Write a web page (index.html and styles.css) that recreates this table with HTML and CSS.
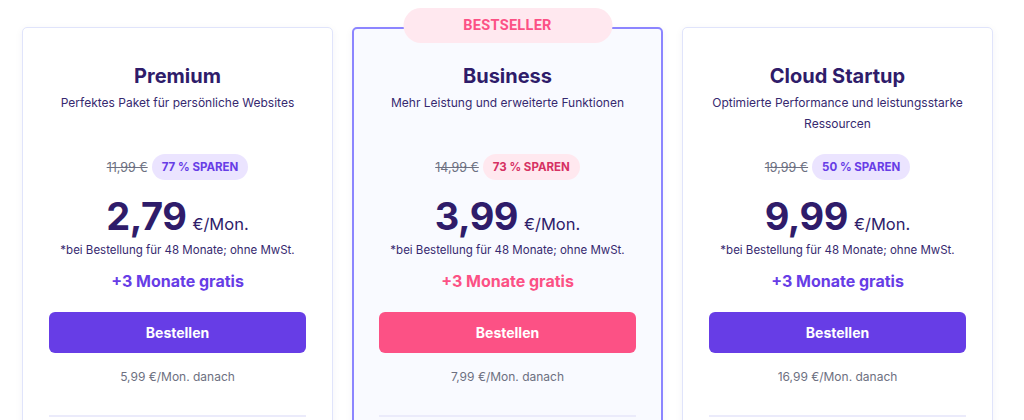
FILE: index.html
```html
<!DOCTYPE html>
<html lang="de">
<head>
<meta charset="utf-8">
<title>Preise</title>
<link rel="stylesheet" href="styles.css">
</head>
<body>
<main class="plans">
  <section class="card">
    <h2 class="title">Premium</h2>
    <p class="subtitle">Perfektes Paket für persönliche Websites</p>
    <div class="save-row">
      <span class="old">11,99 €</span>
      <span class="save">77 % SPAREN</span>
    </div>
    <div class="price"><span class="amount">2,79</span><span class="unit">€/Mon.</span></div>
    <p class="note">*bei Bestellung für 48 Monate; ohne MwSt.</p>
    <p class="bonus">+3 Monate gratis</p>
    <button class="order">Bestellen</button>
    <p class="after">5,99 €/Mon. danach</p>
    <hr class="divider">
  </section>
  <section class="card card--featured">
    <div class="ribbon">BESTSELLER</div>
    <h2 class="title">Business</h2>
    <p class="subtitle">Mehr Leistung und erweiterte Funktionen</p>
    <div class="save-row">
      <span class="old">14,99 €</span>
      <span class="save save--pink">73 % SPAREN</span>
    </div>
    <div class="price"><span class="amount">3,99</span><span class="unit">€/Mon.</span></div>
    <p class="note">*bei Bestellung für 48 Monate; ohne MwSt.</p>
    <p class="bonus bonus--pink">+3 Monate gratis</p>
    <button class="order order--pink">Bestellen</button>
    <p class="after">7,99 €/Mon. danach</p>
    <hr class="divider">
  </section>
  <section class="card">
    <h2 class="title">Cloud Startup</h2>
    <p class="subtitle">Optimierte Performance und leistungsstarke Ressourcen</p>
    <div class="save-row">
      <span class="old">19,99 €</span>
      <span class="save">50 % SPAREN</span>
    </div>
    <div class="price"><span class="amount">9,99</span><span class="unit">€/Mon.</span></div>
    <p class="note">*bei Bestellung für 48 Monate; ohne MwSt.</p>
    <p class="bonus">+3 Monate gratis</p>
    <button class="order">Bestellen</button>
    <p class="after">16,99 €/Mon. danach</p>
    <hr class="divider">
  </section>
</main>
</body>
</html>
```
FILE: styles.css
```css
* { box-sizing: border-box; }
html, body { margin: 0; padding: 0; overflow: hidden; background: #fff; }
body {
  font-family: Inter, "DejaVu Sans", sans-serif;
  color: #2f1c6a;
}
.plans {
  display: flex;
  gap: 19px;
  padding: 27px 0 0 22px;
}
.card {
  position: relative;
  width: 311px;
  min-height: 460px;
  flex: none;
  background: #fff;
  border: 1px solid #e0e4fb;
  border-radius: 5px;
  padding: 34px 26px 0;
  display: flex;
  flex-direction: column;
  align-items: center;
  text-align: center;
  box-shadow: 0 2px 8px rgba(47, 28, 106, 0.05);
}
.card--featured {
  background: #f9faff;
  border: 2px solid #8c85ff;
  padding-top: 33px;
  padding-left: 25px;
  padding-right: 25px;
}
.ribbon {
  position: absolute;
  top: -21px;
  left: 50%;
  transform: translateX(-50%);
  width: 209px;
  height: 35px;
  border-radius: 18px;
  background: #ffe8ef;
  color: #fc5185;
  font-family: Roboto, "Liberation Sans", sans-serif;
  font-weight: 700;
  font-size: 14.5px;
  letter-spacing: 0.3px;
  display: flex;
  align-items: center;
  justify-content: center;
}
.title {
  margin: 0;
  font-size: 20px;
  line-height: 28px;
  font-weight: 700;
}
.subtitle {
  margin: 2px 0 0;
  font-size: 12px;
  line-height: 21px;
  min-height: 42px;
  color: #36296f;
}
.save-row {
  margin-top: 20px;
  display: flex;
  align-items: center;
  gap: 4px;
}
.old {
  font-size: 12.5px;
  color: #6d7081;
  text-decoration: line-through;
}
.save {
  height: 26px;
  line-height: 26px;
  padding: 0 10px;
  border-radius: 13px;
  background: #ebe4ff;
  color: #673de6;
  font-size: 11.5px;
  font-weight: 700;
}
.save--pink { background: #ffe8ef; color: #d63163; }
.price {
  margin-top: 9px;
  display: flex;
  align-items: baseline;
  gap: 6px;
  height: 54px;
}
.amount {
  font-size: 38px;
  line-height: 54px;
  font-weight: 700;
  letter-spacing: -0.5px;
}
.unit {
  font-size: 16.5px;
}
.note {
  margin: -2px 0 0;
  font-size: 11.5px;
  line-height: 18px;
  color: #36296f;
}
.bonus {
  margin: 10px 0 0;
  font-size: 16px;
  line-height: 24px;
  font-weight: 700;
  color: #673de6;
}
.bonus--pink { color: #fc5185; }
.order {
  margin-top: 19px;
  width: 100%;
  height: 41px;
  border: 0;
  border-radius: 6px;
  background: #673de6;
  color: #fff;
  font-family: inherit;
  font-size: 14px;
  font-weight: 700;
}
.order--pink { background: #fc5185; }
.after {
  margin: 14px 0 0;
  font-size: 12px;
  line-height: 20px;
  color: #6d7081;
}
.divider {
  margin: 28px 0 0;
  width: 100%;
  border: 0;
  height: 2px;
  background: #ebebfb;
}
```
